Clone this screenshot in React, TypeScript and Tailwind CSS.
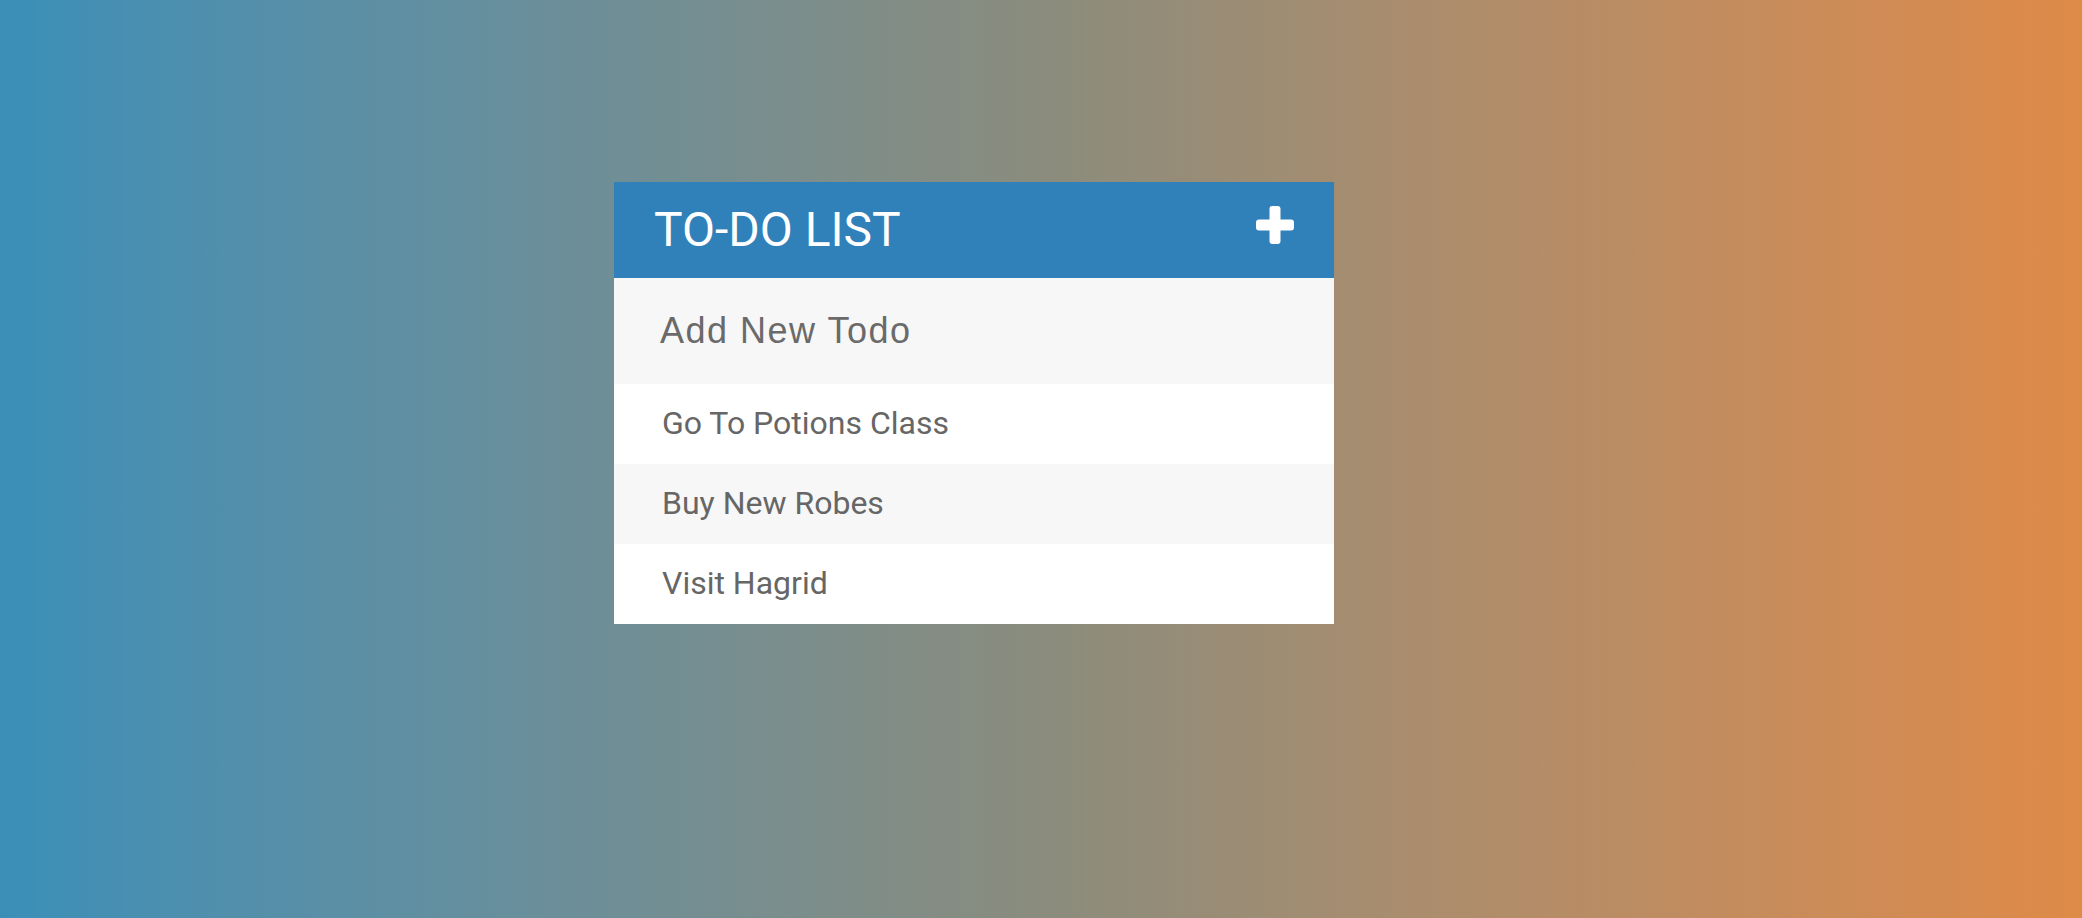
const todos = ["Go To Potions Class", "Buy New Robes", "Visit Hagrid"];

export default function App() {
  return (
    <div className="w-full h-[918px] bg-gradient-to-r from-[#3a8fb8] via-[#8a8c7d] to-[#df8a47] overflow-hidden">
      <div className="ml-[614px] mt-[182px] w-[720px] bg-white">
        {/* header */}
        <div className="h-[96px] bg-[#3080b9] flex items-center justify-between pl-[40px] pr-[40px]">
          <h1 className="text-white text-[48px] leading-none font-['Roboto',sans-serif] font-normal">
            TO-DO LIST
          </h1>
          <svg width="38" height="38" viewBox="0 0 38 38" className="-mt-[10px]">
            <rect x="13.5" y="0" width="11" height="38" rx="3" fill="white" />
            <rect x="0" y="13.5" width="38" height="11" rx="3" fill="white" />
          </svg>
        </div>

        {/* input */}
        <div className="h-[106px] bg-[#f7f7f7] flex items-center pl-[46px]">
          <input
            className="w-full bg-transparent outline-none text-[36px] tracking-[1.5px] text-[#6a6a6a] placeholder:text-[#6a6a6a] font-['Liberation_Sans',Arial,sans-serif]"
            placeholder="Add New Todo"
          />
        </div>

        {/* list */}
        <ul>
          {todos.map((t, i) => (
            <li
              key={t}
              className={
                "h-[80px] flex items-center pl-[48px] pb-[2px] text-[32px] text-[#666] font-['Roboto',sans-serif] " +
                (i % 2 === 1 ? "bg-[#f7f7f7]" : "bg-white")
              }
            >
              {t}
            </li>
          ))}
        </ul>
      </div>
    </div>
  );
}
